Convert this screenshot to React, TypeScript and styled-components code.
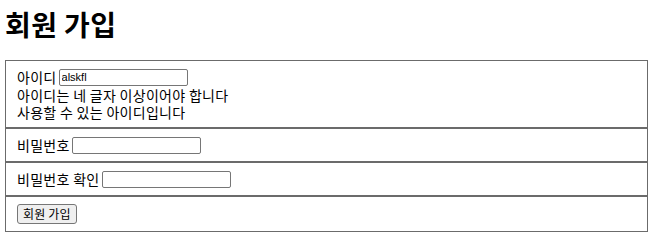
import React, { useState } from "react";
import styled, { createGlobalStyle } from "styled-components";

const GlobalStyle = createGlobalStyle`
  body {
    margin: 0;
    padding: 0 5px;
    background: #ffffff;
    color: #000000;
    font-family: "Noto Sans CJK KR", "Noto Sans", sans-serif;
  }
`;

const Title = styled.h1`
  margin: 0;
  padding: 8px 0 0 0;
  height: 60px;
  box-sizing: border-box;
  font-size: 28px;
  line-height: 32px;
  font-weight: 700;
  letter-spacing: 0.4px;
`;

const Form = styled.form`
  display: flex;
  flex-direction: column;
`;

const Section = styled.div`
  border: 1px solid #6b6b6b;
  padding: 6px 10px 6px 11px;
  font-size: 14px;
  letter-spacing: 0.3px;
`;

const Row = styled.div<{ $h?: number }>`
  display: flex;
  align-items: center;
  gap: 2px;
  height: ${(p) => p.$h ?? 20}px;
`;

const Label = styled.label`
  line-height: 17px;
`;

const Message = styled.div`
  line-height: 17px;
  height: 17px;
`;

const Input = styled.input`
  box-sizing: border-box;
  width: 129px;
  height: 17px;
  padding: 0 2px;
  border: 1px solid #767676;
  border-radius: 2px;
  font-family: "Liberation Sans", Arial, sans-serif;
  font-size: 11px;
  letter-spacing: 0;
  color: #000;
  outline: none;
`;

const Button = styled.button`
  box-sizing: border-box;
  height: 20px;
  padding: 0 5px;
  border: 1px solid #767676;
  border-radius: 3px;
  background: #efefef;
  font-family: "Noto Sans CJK KR", sans-serif;
  font-size: 12px;
  letter-spacing: 0.2px;
  color: #000;
  line-height: 18px;
`;

export default function App() {
  const [id, setId] = useState("alskfl");
  const [pw, setPw] = useState("");
  const [pw2, setPw2] = useState("");

  return (
    <>
      <GlobalStyle />
      <Title>회원 가입</Title>
      <Form onSubmit={(e) => e.preventDefault()}>
        <Section>
          <Row>
            <Label htmlFor="uid">아이디</Label>
            <Input id="uid" value={id} onChange={(e) => setId(e.target.value)} />
          </Row>
          <Message>아이디는 네 글자 이상이어야 합니다</Message>
          <Message>사용할 수 있는 아이디입니다</Message>
        </Section>
        <Section>
          <Row>
            <Label htmlFor="pw">비밀번호</Label>
            <Input id="pw" type="password" value={pw} onChange={(e) => setPw(e.target.value)} />
          </Row>
        </Section>
        <Section>
          <Row>
            <Label htmlFor="pw2">비밀번호 확인</Label>
            <Input id="pw2" type="password" value={pw2} onChange={(e) => setPw2(e.target.value)} />
          </Row>
        </Section>
        <Section>
          <Row $h={22}>
            <Button type="submit">회원 가입</Button>
          </Row>
        </Section>
      </Form>
    </>
  );
}
